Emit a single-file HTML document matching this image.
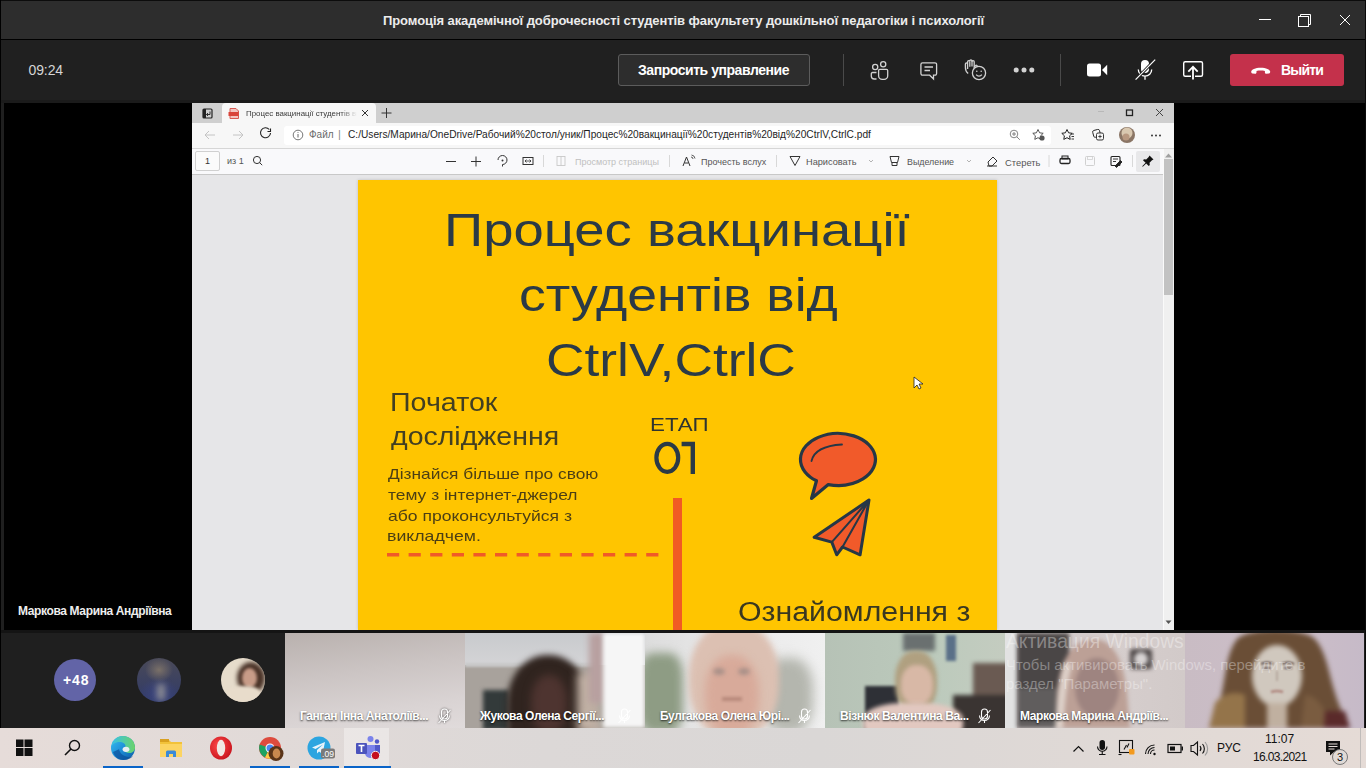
<!DOCTYPE html>
<html><head><meta charset="utf-8">
<style>
*{margin:0;padding:0;box-sizing:border-box}
html,body{width:1366px;height:768px;overflow:hidden;background:#1f1f1f;font-family:"Liberation Sans",sans-serif}
.a{position:absolute}
.t{position:absolute;white-space:nowrap;line-height:1}
svg{position:absolute;overflow:visible}
</style></head><body>
<!-- title bar -->
<div class="a" style="left:0;top:0;width:1366px;height:1px;background:#0c0c0c"></div>
<div class="a" style="left:0;top:1px;width:1366px;height:38px;background:#2d2d2d"></div>
<div class="a" style="left:0;top:39px;width:1366px;height:1px;background:#000"></div>
<div class="t" id="title" style="left:383px;top:13.7px;font-size:13px;color:#ececec;font-weight:bold;letter-spacing:-0.08px">Промоція академічної доброчесності студентів факультету дошкільної педагогіки і психології</div>
<svg style="left:0;top:0" width="1366" height="40">
<line x1="1259" y1="19.5" x2="1271" y2="19.5" stroke="#fff" stroke-width="1"/>
<rect x="1298.5" y="16.5" width="10" height="10" fill="none" stroke="#fff" stroke-width="1"/>
<path d="M1300.5 16.5V14.5H1310.5V24.5H1308.5" fill="none" stroke="#fff" stroke-width="1"/>
<path d="M1340 15L1350 25M1350 15L1340 25" stroke="#fff" stroke-width="1"/>
</svg>

<!-- toolbar -->
<div class="a" style="left:0;top:40px;width:1366px;height:63px;background:#202020"></div>
<div class="a" style="left:0;top:100px;width:1366px;height:3px;background:#1b1b1b"></div>
<div class="t" style="left:28.5px;top:63.3px;font-size:14px;color:#d6d6d6;letter-spacing:-0.1px">09:24</div>
<div class="a" style="left:618px;top:54px;width:192px;height:32px;background:#2d2d2d;border:1px solid #5c5c5c;border-radius:3px"></div>
<div class="t" id="req" style="left:638px;top:63px;font-size:14px;color:#fff;font-weight:bold;letter-spacing:-0.45px">Запросить управление</div>
<div class="a" style="left:843px;top:54px;width:1px;height:32px;background:#4a4a4a"></div>
<div class="a" style="left:1060px;top:54px;width:1px;height:32px;background:#4a4a4a"></div>
<div class="a" style="left:1230px;top:54px;width:114px;height:32px;background:#c4314b;border-radius:3px"></div>
<div class="t" id="lv" style="left:1281px;top:63px;font-size:14px;color:#fff;font-weight:bold;letter-spacing:-0.8px">Выйти</div>


<svg style="left:0;top:40px" width="1366" height="63">
<g fill="none" stroke="#d2d2d2" stroke-width="1.3">
<circle cx="875.2" cy="27" r="2.6"/>
<circle cx="883.2" cy="24.2" r="2.6"/>
<path d="M876.5 32.5h-4a1.2 1.2 0 0 0-1.2 1.2v2.3a3 3 0 0 0 3 3h2.2"/>
<path d="M879.8 29.3h6.7a1.2 1.2 0 0 1 1.2 1.2v5.2a3.6 3.6 0 0 1-3.6 3.6h-1.9a3.6 3.6 0 0 1-3.6-3.6v-5.2a1.2 1.2 0 0 1 1.2-1.2z"/>
<path d="M922.5 22.8h12.5a1.6 1.6 0 0 1 1.6 1.6v9.2a1.6 1.6 0 0 1-1.6 1.6h-1.5v3.8l-3.8-3.8h-7.2a1.6 1.6 0 0 1-1.6-1.6v-9.2a1.6 1.6 0 0 1 1.6-1.6z"/>
<path d="M924.5 27h8.5M924.5 30.5h5.5"/>
<path d="M968.2 33.5C966.2 32 965.4 30 965.4 27.5V24a1.1 1.1 0 0 1 2.2 0V21.8a1.1 1.1 0 0 1 2.2 0V20.9a1.1 1.1 0 0 1 2.2 0V21.8a1.1 1.1 0 0 1 2.2 0V27.2l1.3-1.6a1 1 0 0 1 1.6 1.2l-2.2 3.2"/>
<path d="M967.6 24v5M969.8 21.8v5M972 20.9v5.5"/>
<circle cx="979" cy="33" r="6.6" fill="#1f1f1f"/>
<path d="M976.2 34.6a3.4 3.4 0 0 0 5.6 0"/>
</g>
<circle cx="976.8" cy="31.2" r="0.8" fill="#d2d2d2"/><circle cx="981.2" cy="31.2" r="0.8" fill="#d2d2d2"/>
<circle cx="1016.2" cy="30" r="2.5" fill="#d2d2d2"/><circle cx="1024" cy="30" r="2.5" fill="#d2d2d2"/><circle cx="1031.8" cy="30" r="2.5" fill="#d2d2d2"/>
<rect x="1087" y="23.5" width="14" height="13" rx="2.5" fill="#fff"/>
<path d="M1102 30l5.2-5.3v10.6z" fill="#fff"/>
<rect x="1141" y="20" width="8" height="13" rx="4" fill="#fff"/>
<path d="M1138.3 29.5a6.7 6.7 0 0 0 13.4 0M1145 36.3v3.5" fill="none" stroke="#fff" stroke-width="1.3"/>
<path d="M1136 39.5l18.8-19.5" stroke="#1f1f1f" stroke-width="3"/>
<path d="M1135.6 39.6l19.6-20" stroke="#fff" stroke-width="1.2"/>
<rect x="1183.7" y="21.7" width="18.8" height="14.5" rx="1.5" fill="none" stroke="#fff" stroke-width="1.4"/>
<path d="M1193 39.5v-12.5M1188.3 31.6l4.7-4.8 4.7 4.8" fill="none" stroke="#1f1f1f" stroke-width="4"/>
<path d="M1193 39.5v-12.5M1188.3 31.6l4.7-4.8 4.7 4.8" fill="none" stroke="#fff" stroke-width="1.8"/>
<path d="M1251.2 31.5c0-1.7 4.2-3.8 9.5-3.8s9.5 2.1 9.5 3.8c0 1-0.3 1.8-1.2 1.9l-2.8 0.3c-0.9 0-1.3-0.7-1.3-1.5v-1.2c-1.3-0.5-2.6-0.6-4.2-0.6s-2.9 0.1-4.2 0.6v1.2c0 0.8-0.4 1.5-1.3 1.5l-2.8-0.3c-0.9-0.1-1.2-0.9-1.2-1.9z" fill="#fff"/>
</svg>

<!-- main stage -->
<div class="a" style="left:4px;top:103px;width:1362px;height:527px;background:#000"></div>
<div class="t" id="nm" style="left:18px;top:604.7px;font-size:12px;color:#eeeeee;font-weight:bold;letter-spacing:-0.37px">Маркова Марина Андріївна</div>

<!-- browser -->
<div class="a" id="browser" style="left:192px;top:103px;width:982px;height:527px;background:#e6e6e8;overflow:hidden">
  <div class="a" style="left:0;top:0;width:982px;height:20px;background:#cfcfcf"></div>
  <div class="a" style="left:30px;top:0;width:154px;height:20px;background:#f7f7f7;border-radius:4px 4px 0 0"></div>
  <div class="a" style="left:0;top:20px;width:982px;height:25px;background:#f7f7f7"></div>
  <div class="a" style="left:92px;top:23px;width:767px;height:19px;background:#fff;border-radius:3px"></div>
  <div class="a" style="left:0;top:45px;width:982px;height:1px;background:#d6d6d6"></div>
  <div class="a" style="left:0;top:46px;width:982px;height:25px;background:#f9f9fb"></div>
  <div class="a" style="left:0;top:71px;width:982px;height:1px;background:#c8c8c8"></div>
  <!-- scrollbar -->
  <div class="a" style="left:971px;top:46px;width:11px;height:481px;background:#f0f0f0;border-left:1px solid #fafafa"></div>
  <div class="a" style="left:972px;top:56px;width:9px;height:136px;background:#c2c2c2"></div>
  <!-- slide -->
  <div class="a" id="slide" style="left:166px;top:77px;width:639px;height:450px;background:#ffc500;box-shadow:0 0 3px rgba(0,0,0,0.18)"></div>
</div>



<!-- browser chrome content -->
<div class="t" id="tabt" style="left:246px;top:110px;font-size:7.9px;letter-spacing:0px;color:#3a3a3a;width:111px;overflow:hidden;-webkit-mask-image:linear-gradient(90deg,#000 85%,transparent)">Процес вакцинації студентів від</div>
<div class="t" id="fl" style="left:309px;top:130px;font-size:10px;color:#6a6a6a">Файл</div>
<div class="t" style="left:338px;top:129px;font-size:11px;color:#8a8a8a">|</div>
<div class="t" id="url" style="left:348px;top:130px;font-size:10.17px;color:#1e1e1e">C:/Users/Марина/OneDrive/Рабочий%20стол/уник/Процес%20вакцинації%20студентів%20від%20CtrlV,CtrlC.pdf</div>
<div class="a" style="left:195px;top:151px;width:25px;height:20px;border:1px solid #d0d0d0;background:#fbfbfb;border-radius:2px"></div>
<div class="t" style="left:205px;top:157px;font-size:9px;color:#333">1</div>
<div class="t" style="left:227px;top:157px;font-size:9px;color:#555">из 1</div>
<div class="t" id="pv" style="left:575px;top:157.5px;font-size:9px;color:#c0c0c0">Просмотр страницы</div>
<div class="t" id="ra" style="left:701px;top:157.5px;font-size:9px;color:#555">Прочесть вслух</div>
<div class="t" id="dr" style="left:806px;top:157.5px;font-size:9.2px;color:#555">Нарисовать</div>
<div class="t" id="hl" style="left:907px;top:157.5px;font-size:8.9px;color:#555">Выделение</div>
<div class="t" id="er" style="left:1005px;top:157.5px;font-size:9.4px;color:#555">Стереть</div>
<div class="a" style="left:1136px;top:151px;width:24px;height:21px;background:#e8e8ea;border-radius:2px"></div>
<svg style="left:0;top:0" width="1366" height="180">
<!-- tab actions -->
<rect x="203" y="109" width="9" height="9" rx="1" fill="none" stroke="#222" stroke-width="1.2"/>
<rect x="203" y="109" width="3" height="9" fill="#222"/>
<path d="M210 111.5v3h-3.5M208 113l-1.5 1.5 1.5 1.5" fill="none" stroke="#222" stroke-width="0.9"/>
<!-- pdf icon -->
<path d="M230 108.5h6l2.5 2.5v7.5h-8.5z" fill="#f2c4c0" stroke="#d85a52" stroke-width="1"/>
<rect x="228.5" y="112" width="10" height="4" fill="#d9443a"/>
<!-- close tab -->
<path d="M362 110l6 6M368 110l-6 6" stroke="#333" stroke-width="1"/>
<!-- plus -->
<path d="M386.5 108v10M381.5 113h10" stroke="#333" stroke-width="1"/>
<!-- window controls -->
<line x1="1098" y1="111.5" x2="1104" y2="111.5" stroke="#b8b8b8" stroke-width="1"/>
<rect x="1126.5" y="110" width="6" height="5.5" fill="none" stroke="#222" stroke-width="1.3"/>
<path d="M1156 109l7 7M1163 109l-7 7" stroke="#444" stroke-width="1"/>
<!-- back/fwd/refresh -->
<path d="M215 135h-10M209 131l-4 4 4 4" fill="none" stroke="#c4c4c4" stroke-width="1"/>
<path d="M233 135h10M239 131l4 4-4 4" fill="none" stroke="#c4c4c4" stroke-width="1"/>
<path d="M270.5 133a5 5 0 1 1-1.2-3.5" fill="none" stroke="#222" stroke-width="1.1"/>
<path d="M270.5 128.5v3h-3" fill="none" stroke="#222" stroke-width="1.1"/>
<!-- info -->
<circle cx="298" cy="135" r="4.8" fill="none" stroke="#666" stroke-width="0.9"/>
<path d="M298 134v3.5M298 132v0.8" stroke="#666" stroke-width="1"/>
<!-- zoom -->
<circle cx="1014" cy="134" r="3.8" fill="none" stroke="#777" stroke-width="0.9"/>
<path d="M1016.8 136.8l3 3M1012 134h4M1014 132v4" stroke="#777" stroke-width="0.9"/>
<!-- star plus -->
<path d="M1038 129.5l1.6 3.3 3.6.5-2.6 2.5.6 3.6-3.2-1.7-3.2 1.7.6-3.6-2.6-2.5 3.6-.5z" fill="none" stroke="#444" stroke-width="0.9"/>
<circle cx="1042" cy="138" r="2.6" fill="#555"/>
<!-- favorites -->
<path d="M1067 129.5l1.6 3.3 3.6.5-2.6 2.5.6 3.6-3.2-1.7-3.2 1.7.6-3.6-2.6-2.5 3.6-.5z" fill="none" stroke="#222" stroke-width="1"/>
<path d="M1071 134h3M1071.5 136.5h2.5M1071.5 139h2.5" stroke="#222" stroke-width="0.9"/>
<!-- collections -->
<rect x="1093" y="130" width="7" height="7" rx="1.5" fill="none" stroke="#222" stroke-width="0.9" transform="rotate(-15 1096 133)"/>
<rect x="1096.5" y="133" width="7" height="7" rx="1.5" fill="#f7f7f7" stroke="#222" stroke-width="0.9"/>
<path d="M1100 134.8v3.4M1098.3 136.5h3.4" stroke="#222" stroke-width="0.8"/>
<!-- avatar -->
<circle cx="1127" cy="135" r="8" fill="#8a7565"/>
<circle cx="1127" cy="133" r="5.5" fill="#d9c8b0"/>
<circle cx="1126" cy="137" r="3.5" fill="#b89880"/>
<!-- dots -->
<circle cx="1152" cy="135.5" r="0.9" fill="#222"/><circle cx="1156" cy="135.5" r="0.9" fill="#222"/><circle cx="1160" cy="135.5" r="0.9" fill="#222"/>
<!-- pdf toolbar icons -->
<circle cx="257" cy="160" r="3.6" fill="none" stroke="#333" stroke-width="1"/>
<path d="M259.6 162.6l2.6 2.6" stroke="#333" stroke-width="1"/>
<path d="M446 161.5h10" stroke="#333" stroke-width="1"/>
<path d="M471 161.5h10M476 156.5v10" stroke="#333" stroke-width="1"/>
<path d="M498 160a4.5 4.5 0 1 1 4.5 4.5l0 2" fill="none" stroke="#333" stroke-width="1"/>
<circle cx="502.5" cy="160.5" r="1" fill="#333"/>
<rect x="523" y="157.5" width="10" height="7" fill="none" stroke="#333" stroke-width="1"/>
<path d="M525 161h6M525 161l1.5-1.5M525 161l1.5 1.5M531 161l-1.5-1.5M531 161l-1.5 1.5" stroke="#333" stroke-width="0.8"/>
<path d="M543.5 155v12M669.5 155v12M776.5 155v12M1049 155v12M1132.5 155v12" stroke="#d8d8d8" stroke-width="1"/>
<rect x="557" y="156.5" width="8" height="9" fill="none" stroke="#c8c8c8" stroke-width="0.9"/>
<path d="M561 156.5v9" stroke="#c8c8c8" stroke-width="0.9"/>
<path d="M683 166l3.5-9 3.5 9M684.5 163h4" fill="none" stroke="#333" stroke-width="1"/>
<path d="M691 157a2 2 0 0 1 2 2M691.5 155a4 4 0 0 1 3.5 3.5" fill="none" stroke="#333" stroke-width="0.8"/>
<path d="M790 156.5h10l-5 9z" fill="none" stroke="#333" stroke-width="1"/>
<path d="M869 160l2 2 2-2" fill="none" stroke="#aaa" stroke-width="0.9"/>
<path d="M890 156.5h9l-1.5 6h-6z M892 162.5v3h5v-3" fill="none" stroke="#333" stroke-width="1"/>
<path d="M967 160l2 2 2-2" fill="none" stroke="#aaa" stroke-width="0.9"/>
<path d="M988 162l5-5 4 4-5 5h-3z M987 166h10" fill="none" stroke="#333" stroke-width="1"/>
<rect x="1060" y="158.5" width="10" height="5" rx="1.5" fill="none" stroke="#222" stroke-width="1.3"/>
<rect x="1062" y="156" width="6" height="3" fill="none" stroke="#222" stroke-width="1"/>
<rect x="1085.5" y="156.5" width="9" height="9" rx="1" fill="none" stroke="#d0d0d0" stroke-width="1"/>
<rect x="1087.5" y="156.5" width="5" height="3" fill="none" stroke="#d0d0d0" stroke-width="0.8"/>
<rect x="1111" y="156.5" width="9" height="9" rx="1" fill="none" stroke="#222" stroke-width="1.1"/>
<path d="M1113 159h5M1113 161.5h3M1115 166l5.5-5.5 1.5 1.5-5.5 5.5z" fill="#222" stroke="#222" stroke-width="0.9"/>
<path d="M1149.5 155.5l4 4-1.5 0.8-2.5 2.5.3 2.2-1 1-2.6-2.6-3.4 3.4-.6-.6 3.4-3.4-2.6-2.6 1-1 2.2.3 2.5-2.5z" fill="#111"/>
<path d="M1165 157.5l3.5-4 3.5 4z" fill="#a0a0a0"/>
</svg>
<svg style="left:0;top:0" width="1366" height="640">
<path d="M1165.5 624l3-3.5 3 3.5z" fill="#555" transform="rotate(180 1168.5 622.2)"/>
</svg>

<!-- slide text -->
<div class="t" id="s1" style="left:444px;top:206.3px;font-size:47px;color:#2b3a46;transform:scaleX(1.1585);transform-origin:0 0">Процес вакцинації</div>
<div class="t" id="s2" style="left:519px;top:271.3px;font-size:47px;color:#2b3a46;transform:scaleX(1.1394);transform-origin:0 0">студентів від</div>
<div class="t" id="s3" style="left:546px;top:335.5px;font-size:47px;color:#2b3a46;transform:scaleX(1.1346);transform-origin:0 0">CtrlV,CtrlC</div>
<div class="t" id="s4" style="left:389.5px;top:389.2px;font-size:26px;color:#423f22;transform:scaleX(1.102);transform-origin:0 0">Початок</div>
<div class="t" id="s5" style="left:390.5px;top:423.2px;font-size:26px;color:#423f22;transform:scaleX(1.096);transform-origin:0 0">дослідження</div>
<div class="t" id="p1" style="left:388px;top:466px;font-size:15px;color:#4c3f14;transform:scaleX(1.155);transform-origin:0 0">Дізнайся більше про свою</div>
<div class="t" id="p2" style="left:387.5px;top:487px;font-size:15px;color:#4c3f14;transform:scaleX(1.16);transform-origin:0 0">тему з інтернет-джерел</div>
<div class="t" id="p3" style="left:387.5px;top:508px;font-size:15px;color:#4c3f14;transform:scaleX(1.17);transform-origin:0 0">або проконсультуйся з</div>
<div class="t" id="p4" style="left:386.5px;top:528px;font-size:15px;color:#4c3f14;transform:scaleX(1.18);transform-origin:0 0">викладчем.</div>
<div class="t" id="e1" style="left:650px;top:416px;font-size:18px;color:#2f3530;transform:scaleX(1.24);transform-origin:0 0">ЕТАП</div>
<svg style="left:0;top:0" width="1366" height="630">
<ellipse cx="667.3" cy="457.8" rx="10.9" ry="14" fill="none" stroke="#2b3a46" stroke-width="4.2"/>
<path d="M692.8 474V444H681.6" fill="none" stroke="#2b3a46" stroke-width="4.4"/>
</svg>
<div class="t" id="o1" style="left:738px;top:598.5px;font-size:27px;color:#3a3820;transform:scaleX(1.122);transform-origin:0 0">Ознайомлення з</div>
<div class="a" style="left:673px;top:498px;width:9px;height:132px;background:#f15a24"></div>


<svg style="left:0;top:0" width="1366" height="630">
<line x1="387" y1="554.8" x2="659" y2="554.8" stroke="#f05a28" stroke-width="3.6" stroke-dasharray="12.2 9.4"/>
<path d="M816.5 480.8 L811.5 498.5 L828.3 484.6 A37.5 26 0 1 0 816.5 480.8 Z" fill="#f15a2a" stroke="#263746" stroke-width="3.2" stroke-linejoin="round"/>
<path d="M811.5 461 Q815 446 842 444.5" fill="none" stroke="#263746" stroke-width="1.8" stroke-linecap="round"/>
<path d="M869 500 L814.2 537.3 L831.8 542.1 L836.7 554.8 L842.5 547 L860.1 554.8 Z" fill="#f15a2a" stroke="#263746" stroke-width="3" stroke-linejoin="round"/>
<path d="M869 500 L831.8 542.1 M869 500 L842.5 547" stroke="#263746" stroke-width="2" fill="none"/>
<path d="M914 377 L914 388 L917 385 L919 389 L921 388 L919 384 L923 384 Z" fill="#fff" stroke="#222" stroke-width="0.8"/>
</svg>

<!-- bottom strip -->
<div class="a" style="left:0;top:630px;width:1366px;height:3px;background:#141414"></div>
<div class="a" style="left:0;top:633px;width:1366px;height:95px;background:#1f1f1f"></div>
<div class="a" style="left:54px;top:659px;width:42px;height:42px;border-radius:50%;background:#6264a7"></div>
<div class="t" id="p48" style="left:63px;top:672.5px;font-size:14px;color:#fff;font-weight:bold;letter-spacing:0.9px">+48</div>
<div class="a" style="left:137px;top:658px;width:44px;height:44px;border-radius:50%;overflow:hidden;background:radial-gradient(ellipse 14px 12px at 22px 12px,#7a7068,transparent),radial-gradient(ellipse 20px 16px at 22px 36px,#3a4480,transparent),linear-gradient(#4a4a58,#303a68)">
  <div class="a" style="left:20px;top:26px;width:8px;height:16px;background:#8a8a90;filter:blur(3px)"></div>
</div>
<div class="a" style="left:221px;top:658px;width:44px;height:44px;border-radius:50%;overflow:hidden;background:#e6dccb">
  <div class="a" style="left:16px;top:4px;width:28px;height:32px;border-radius:50%;background:#4a3328;filter:blur(2px)"></div>
  <div class="a" style="left:21px;top:10px;width:15px;height:20px;border-radius:50%;background:#c89c88;filter:blur(1.5px)"></div>
  <div class="a" style="left:6px;top:28px;width:34px;height:20px;border-radius:40%;background:#e8dccb;filter:blur(1.5px)"></div>
</div>

<!-- tiles -->
<div class="a" style="left:285px;top:633px;width:180px;height:95px;overflow:hidden;background:linear-gradient(172deg,#b9b1ae,#cbc4c3 40%,#d9d3d3 75%,#e0dbdb)"></div>

<div class="a" style="left:465px;top:633px;width:180px;height:95px;overflow:hidden;background:#a8a29c">
  <div class="a" style="left:0;top:0;width:180px;height:32px;background:linear-gradient(#c8cacd,#d4d4d6)"></div>
  <div class="a" style="left:0;top:30px;width:130px;height:4px;background:#c8c8c8;filter:blur(1px)"></div>
  <div class="a" style="left:18px;top:57px;width:26px;height:40px;background:#333a3a;filter:blur(2px)"></div>
  <div class="a" style="left:42px;top:22px;width:82px;height:100px;border-radius:48% 48% 30% 30%;background:#30241f;filter:blur(3px)"></div>
  <div class="a" style="left:66px;top:42px;width:36px;height:58px;border-radius:45%;background:#4e3430;filter:blur(4px)"></div>
  <div class="a" style="left:112px;top:40px;width:22px;height:60px;background:#c0b0a4;filter:blur(4px)"></div>
  <div class="a" style="left:124px;top:0;width:16px;height:70px;background:#b8a0a0;filter:blur(3px)"></div>
  <div class="a" style="left:138px;top:0;width:42px;height:95px;background:#f6f6f6;filter:blur(2px)"></div>
</div>

<div class="a" style="left:645px;top:633px;width:180px;height:95px;overflow:hidden;background:linear-gradient(90deg,#dcdcdc,#e8e8e8 40%,#f0f0f0)">
  <div class="a" style="left:-6px;top:20px;width:44px;height:80px;background:#8e9c84;filter:blur(5px);border-radius:30%"></div>
  <div class="a" style="left:118px;top:25px;width:50px;height:75px;background:#b4b6ae;filter:blur(6px);border-radius:40%"></div>
  <div class="a" style="left:44px;top:-10px;width:90px;height:115px;border-radius:45%;background:#dcc0b2;filter:blur(3px)"></div>
  <div class="a" style="left:60px;top:22px;width:54px;height:80px;border-radius:45%;background:#d8aa9a;filter:blur(4px)"></div>
  <div class="a" style="left:68px;top:35px;width:12px;height:7px;border-radius:50%;background:#a89088;filter:blur(2px)"></div>
  <div class="a" style="left:93px;top:35px;width:12px;height:7px;border-radius:50%;background:#a89088;filter:blur(2px)"></div>
  <div class="a" style="left:77px;top:64px;width:20px;height:4px;background:#b88a7c;filter:blur(1.5px)"></div>
</div>

<div class="a" style="left:825px;top:633px;width:180px;height:95px;overflow:hidden;background:linear-gradient(90deg,#b6c2b6,#bccabc 60%,#c4ccc0)">
  <div class="a" style="left:78px;top:0;width:32px;height:18px;background:#6a7070;filter:blur(2px)"></div>
  <div class="a" style="left:121px;top:2px;width:10px;height:26px;background:#5a7088;filter:blur(1.5px)"></div>
  <div class="a" style="left:148px;top:30px;width:40px;height:70px;background:#6a5a52;filter:blur(2px)"></div>
  <div class="a" style="left:128px;top:62px;width:60px;height:40px;background:#3a3432;filter:blur(2px)"></div>
  <div class="a" style="left:40px;top:53px;width:34px;height:45px;background:#2e3036;filter:blur(1.5px)"></div>
  <div class="a" style="left:70px;top:18px;width:42px;height:62px;border-radius:45%;background:#b0a080;filter:blur(2px)"></div>
  <div class="a" style="left:76px;top:32px;width:32px;height:40px;border-radius:45%;background:#d8b8a6;filter:blur(2px)"></div>
  <div class="a" style="left:38px;top:70px;width:100px;height:40px;border-radius:40%;background:#e2c8c0;filter:blur(2px)"></div>
</div>

<div class="a" style="left:1005px;top:633px;width:180px;height:95px;overflow:hidden;background:linear-gradient(90deg,#cfc6c6,#d6cecd 60%,#d2cac9)">
  <div class="a" style="left:0;top:0;width:12px;height:95px;background:#e2e2e2"></div>
  <svg style="left:0;top:0;filter:blur(2px)" width="180" height="95">
    <path d="M12 0h52v95H12z" fill="#4a4646"/>
    <path d="M12 55h52v40H12z" fill="#6a6666" opacity="0.7"/>
    <path d="M52 95c-2-30 0-60 14-78 8-10 22-14 34-8 14 8 20 30 22 50 1 14 2 26 3 36z" fill="#bca096"/>
    <path d="M54 95c2-25 4-50 10-65" stroke="#ddd0c8" stroke-width="8" fill="none"/>
    <ellipse cx="92" cy="55" rx="22" ry="30" fill="#9e8480"/>
    <rect x="125" y="16" width="22" height="20" rx="3" fill="#4a4444"/>
    <ellipse cx="136" cy="26" rx="7" ry="7" fill="#d8d4d4"/>
  </svg>
</div>

<div class="a" style="left:1185px;top:633px;width:181px;height:95px;overflow:hidden;background:linear-gradient(90deg,#c9bcc4,#ccbec8 60%,#c6bac8)">
  <svg style="left:0;top:0;filter:blur(2.5px)" width="181" height="95">
    <path d="M52 6C64-6 118-6 130 6c12 14 14 36 20 54 4 14 10 24 14 35H24c4-12 10-22 13-36 4-20 5-40 15-53z" fill="#6a4e36"/>
    <path d="M30 70c8-10 20-12 30-8v33H24z" fill="#94744a"/>
    <path d="M120 62c10 0 20 10 26 33h-30z" fill="#7a5c40"/>
    <ellipse cx="92" cy="43" rx="25" ry="31" fill="#d0c8be"/>
    <rect x="82" y="70" width="20" height="25" fill="#c0b0a0"/>
    <path d="M140 78l20 0 5 17h-26z" fill="#5a2a2a"/>
  </svg>
  <svg style="left:0;top:0;filter:blur(1px)" width="181" height="95"><path d="M76 31q6-3 12 0M97 31q6-3 12 0" stroke="#5a4a48" stroke-width="2" fill="none"/><path d="M78 35h8M99 35h8" stroke="#6a5a5a" stroke-width="2.2"/><path d="M86 59q6-2 12 0" stroke="#b08880" stroke-width="2.5" fill="none"/><path d="M92 38v10" stroke="#b8aaa0" stroke-width="2"/></svg>
  <div class="a" style="left:179px;top:0;width:2px;height:95px;background:#1f1f1f"></div>
</div>

<div class="t" id="wm1" style="left:1006px;top:632px;font-size:19.3px;color:rgba(255,255,255,0.36)">Активация Windows</div>
<div class="t" id="wm2" style="left:1006px;top:657.5px;font-size:14.9px;color:rgba(255,255,255,0.34)">Чтобы активировать Windows, перейдите в</div>
<div class="t" id="wm3" style="left:1006px;top:677px;font-size:14.9px;color:rgba(255,255,255,0.34)">раздел "Параметры".</div>

<div class="t" id="n1" style="letter-spacing:-0.4px;left:300px;top:710px;font-size:12px;color:#fff;font-weight:bold;text-shadow:0 1px 2px rgba(0,0,0,.75)">Ганган Інна Анатоліїв...</div>
<div class="t" id="n2" style="letter-spacing:-0.4px;left:480px;top:710px;font-size:12px;color:#fff;font-weight:bold;text-shadow:0 1px 2px rgba(0,0,0,.75)">Жукова Олена Сергії...</div>
<div class="t" id="n3" style="letter-spacing:-0.4px;left:660px;top:710px;font-size:12px;color:#fff;font-weight:bold;text-shadow:0 1px 2px rgba(0,0,0,.75)">Булгакова Олена Юрі...</div>
<div class="t" id="n4" style="letter-spacing:-0.4px;left:840px;top:710px;font-size:12px;color:#fff;font-weight:bold;text-shadow:0 1px 2px rgba(0,0,0,.75)">Візнюк Валентина Ва...</div>
<div class="t" id="n5" style="letter-spacing:-0.4px;left:1020px;top:710px;font-size:12px;color:#fff;font-weight:bold;text-shadow:0 1px 2px rgba(0,0,0,.75)">Маркова Марина Андріїв...</div>
<svg style="left:0;top:633px" width="1366" height="95">
<g fill="none" stroke="#fff" stroke-width="1.1" style="filter:drop-shadow(0 0 1px rgba(0,0,0,.7))">
<path id="mic" d="M441.5 79a3 3 0 0 1 6 0v4a3 3 0 0 1-6 0zM439.5 82.5a5 5 0 0 0 10 0M444.5 87.5v2.5M438.5 90l12-13"/>
</g>
<use href="#mic" x="180" stroke="#fff" fill="none" stroke-width="1.1"/>
<use href="#mic" x="360" stroke="#fff" fill="none" stroke-width="1.1"/>
<use href="#mic" x="540" stroke="#fff" fill="none" stroke-width="1.1"/>
</svg>

<div class="a" style="left:0;top:0;width:1px;height:728px;background:#000"></div>
<div class="a" style="left:1365px;top:0;width:1px;height:728px;background:#0a0a0a"></div>
<!-- taskbar -->
<div class="a" style="left:0;top:728px;width:1366px;height:40px;background:linear-gradient(90deg,#e6dcd9,#dcd8d7 40%,#dad7d6 60%,#e5dbd6)"></div>

<div class="a" style="left:344px;top:728px;width:45px;height:40px;background:rgba(255,255,255,0.35)"></div>
<div class="a" style="left:103px;top:766px;width:40px;height:2px;background:#0a64c8"></div>
<div class="a" style="left:250px;top:766px;width:40px;height:2px;background:#0a64c8"></div>
<div class="a" style="left:299px;top:766px;width:40px;height:2px;background:#0a64c8"></div>
<div class="a" style="left:344px;top:766px;width:47px;height:2px;background:#0a64c8"></div>
<div class="a" style="left:1360px;top:728px;width:1px;height:40px;background:#c0bcba"></div>
<svg style="left:0;top:728px" width="1366" height="40">
<defs>
<linearGradient id="edg" x1="0" y1="0" x2="1" y2="1"><stop offset="0" stop-color="#35c1f1"/><stop offset="0.5" stop-color="#1f8fd8"/><stop offset="1" stop-color="#0c59a4"/></linearGradient>
<linearGradient id="edg2" x1="0" y1="0" x2="1" y2="0"><stop offset="0" stop-color="#39c1e6"/><stop offset="1" stop-color="#6ad36a"/></linearGradient>
<radialGradient id="opg" cx="0.4" cy="0.4" r="0.7"><stop offset="0" stop-color="#ff4a4a"/><stop offset="1" stop-color="#c4101a"/></radialGradient>
</defs>
<!-- windows -->
<path d="M16 11.5h7.5v7.5H16zM24.5 11.5h8v7.5h-8zM16 20h7.5v8H16zM24.5 20h8v8h-8z" fill="#111"/>
<!-- search -->
<circle cx="74.5" cy="17.5" r="5" fill="none" stroke="#111" stroke-width="1.4"/>
<path d="M71 21l-6 6" stroke="#111" stroke-width="1.6"/>
<!-- edge -->
<circle cx="123" cy="20" r="12" fill="url(#edg)"/>
<path d="M111.5 18.5C112.5 11 118 8 123 8c6.5 0 12 5 12 11.5 0 3.5-2.5 5.5-6 5.5-3 0-4.5-1.5-4.5-3.5 0-1.5 1-2.5 1-3.5 0-2-2.5-4-6-4-4.5 0-7.5 2.5-8 4.5z" fill="url(#edg2)"/>
<ellipse cx="126" cy="21.3" rx="3.4" ry="2.6" fill="#e9eef2"/>
<path d="M113 24c1.5 5 6 8 10.5 8 4 0 7.5-1.5 9.5-4-2 1-4 1.2-6 0.8-4-0.8-7-3.5-8-7.5z" fill="#0b4f9a" opacity="0.7"/>
<!-- explorer -->
<path d="M160 12h9l2 2h11v15h-22z" fill="#f2c23a"/>
<rect x="160" y="11" width="9" height="3" fill="#d9a020"/>
<rect x="160" y="16" width="22" height="13" fill="#fcd462"/>
<path d="M166 29v-5a1.5 1.5 0 0 1 1.5-1.5h7a1.5 1.5 0 0 1 1.5 1.5v5h-3v-3h-4v3z" fill="#3a8ad8"/>
<!-- opera -->
<ellipse cx="221" cy="20" rx="11" ry="11.5" fill="url(#opg)"/>
<ellipse cx="221" cy="20" rx="4.2" ry="8.3" fill="#f0e8e4"/>
<!-- chrome -->
<circle cx="270" cy="20" r="11" fill="#dd4b3e"/>
<path d="M270 20L259.5 16.5A11 11 0 0 0 265 29.5z" fill="#1ea362"/>
<path d="M270 20l-5 9.5A11 11 0 0 0 281 20z" fill="#ffcd46"/>
<circle cx="270" cy="20" r="4.5" fill="#fff"/>
<circle cx="270" cy="20" r="3.5" fill="#4a8af4"/>
<circle cx="276" cy="25.5" r="7.5" fill="#5a3418"/>
<ellipse cx="276.5" cy="25.5" rx="3.8" ry="5" fill="#c8884e"/>
<!-- telegram -->
<circle cx="319" cy="20" r="11.5" fill="#2ca5e0"/>
<path d="M312 19.5l13-5.5-2.5 12-3.5-2.5-2 2v-3.5l6-5.5-7.5 4.5z" fill="#e8f4fb"/>
<rect x="321" y="20.5" width="14" height="10" rx="2" fill="#7a7a7a"/>
<text x="328" y="28.8" font-size="8.5" fill="#fff" text-anchor="middle" font-family="Liberation Sans">.09</text>
<!-- teams -->
<circle cx="370.5" cy="11" r="3" fill="#7b83eb"/>
<circle cx="377" cy="13.5" r="2.2" fill="#5059c9"/>
<path d="M372 17h8v7a4 4 0 0 1-4 4h-4z" fill="#5059c9"/>
<path d="M364 17h11v8a5 5 0 0 1-10 0z" fill="#7b83eb"/>
<rect x="356" y="15" width="11" height="11" rx="1" fill="#4b53bc"/>
<path d="M358.5 17.5h6M361.5 17.5v6.5" stroke="#fff" stroke-width="1.6"/>
<circle cx="375.5" cy="27.5" r="4.2" fill="#c50f1f" stroke="#f2eeec" stroke-width="1"/>
<!-- tray -->
<path d="M1073.5 23.5l5-5 5 5" fill="none" stroke="#111" stroke-width="1.2"/>
<rect x="1099.5" y="12" width="5.5" height="10" rx="2.75" fill="#111"/>
<path d="M1097.5 18.5a4.75 4.75 0 0 0 9.5 0M1102.25 23.5v3M1099 26.5h6.5" fill="none" stroke="#111" stroke-width="1.1"/>
<rect x="1119.5" y="12.5" width="13" height="12" fill="none" stroke="#111" stroke-width="1.1"/>
<path d="M1118.5 26.5h3" stroke="#111" stroke-width="1.1"/>
<path d="M1124 21.5l2.5-4.5M1129 15.5l-2 4" stroke="#111" stroke-width="1.1"/>
<rect x="1129" y="21" width="5.5" height="5.5" rx="1" fill="#f39a1e"/>
<path d="M1145.5 26a9 9 0 0 1 9-9M1148 26a6.5 6.5 0 0 1 6.5-6.5M1150.5 26a4 4 0 0 1 4-4" fill="none" stroke="#111" stroke-width="1.1"/>
<circle cx="1154.5" cy="26" r="1.2" fill="#111"/>
<rect x="1168" y="16.5" width="13" height="8" fill="none" stroke="#111" stroke-width="1.2"/>
<rect x="1170" y="18.5" width="5" height="4" fill="#111"/>
<rect x="1181.5" y="18.5" width="1.5" height="4" fill="#111"/>
<path d="M1191 17.5h2.5l4-3.5v13l-4-3.5H1191z" fill="none" stroke="#111" stroke-width="1.1"/>
<path d="M1200 18a4 4 0 0 1 0 5M1202.5 16a7 7 0 0 1 0 9.5" fill="none" stroke="#111" stroke-width="1.1"/>
<path d="M1205 14a10 10 0 0 1 0 13.5" fill="none" stroke="#999" stroke-width="1.1"/>
<!-- notif -->
<path d="M1326 13h14v11h-6l-4 3.5V24h-4z" fill="#111"/>
<path d="M1328.5 16h9M1328.5 18.5h9M1328.5 21h6" stroke="#e6dcd8" stroke-width="1"/>
<circle cx="1340" cy="29" r="7.5" fill="#e0dad6" stroke="#777" stroke-width="1"/>
<text x="1340" y="33" font-size="11" fill="#111" text-anchor="middle" font-family="Liberation Sans">3</text>
</svg>
<div class="t" id="rus" style="left:1217px;top:742px;font-size:12px;color:#111">РУС</div>
<div class="t" id="tm" style="left:1265px;top:733px;font-size:12px;color:#111">11:07</div>
<div class="t" id="dt" style="left:1253px;top:751px;font-size:12px;color:#111;letter-spacing:-0.65px">16.03.2021</div>
</body></html>
